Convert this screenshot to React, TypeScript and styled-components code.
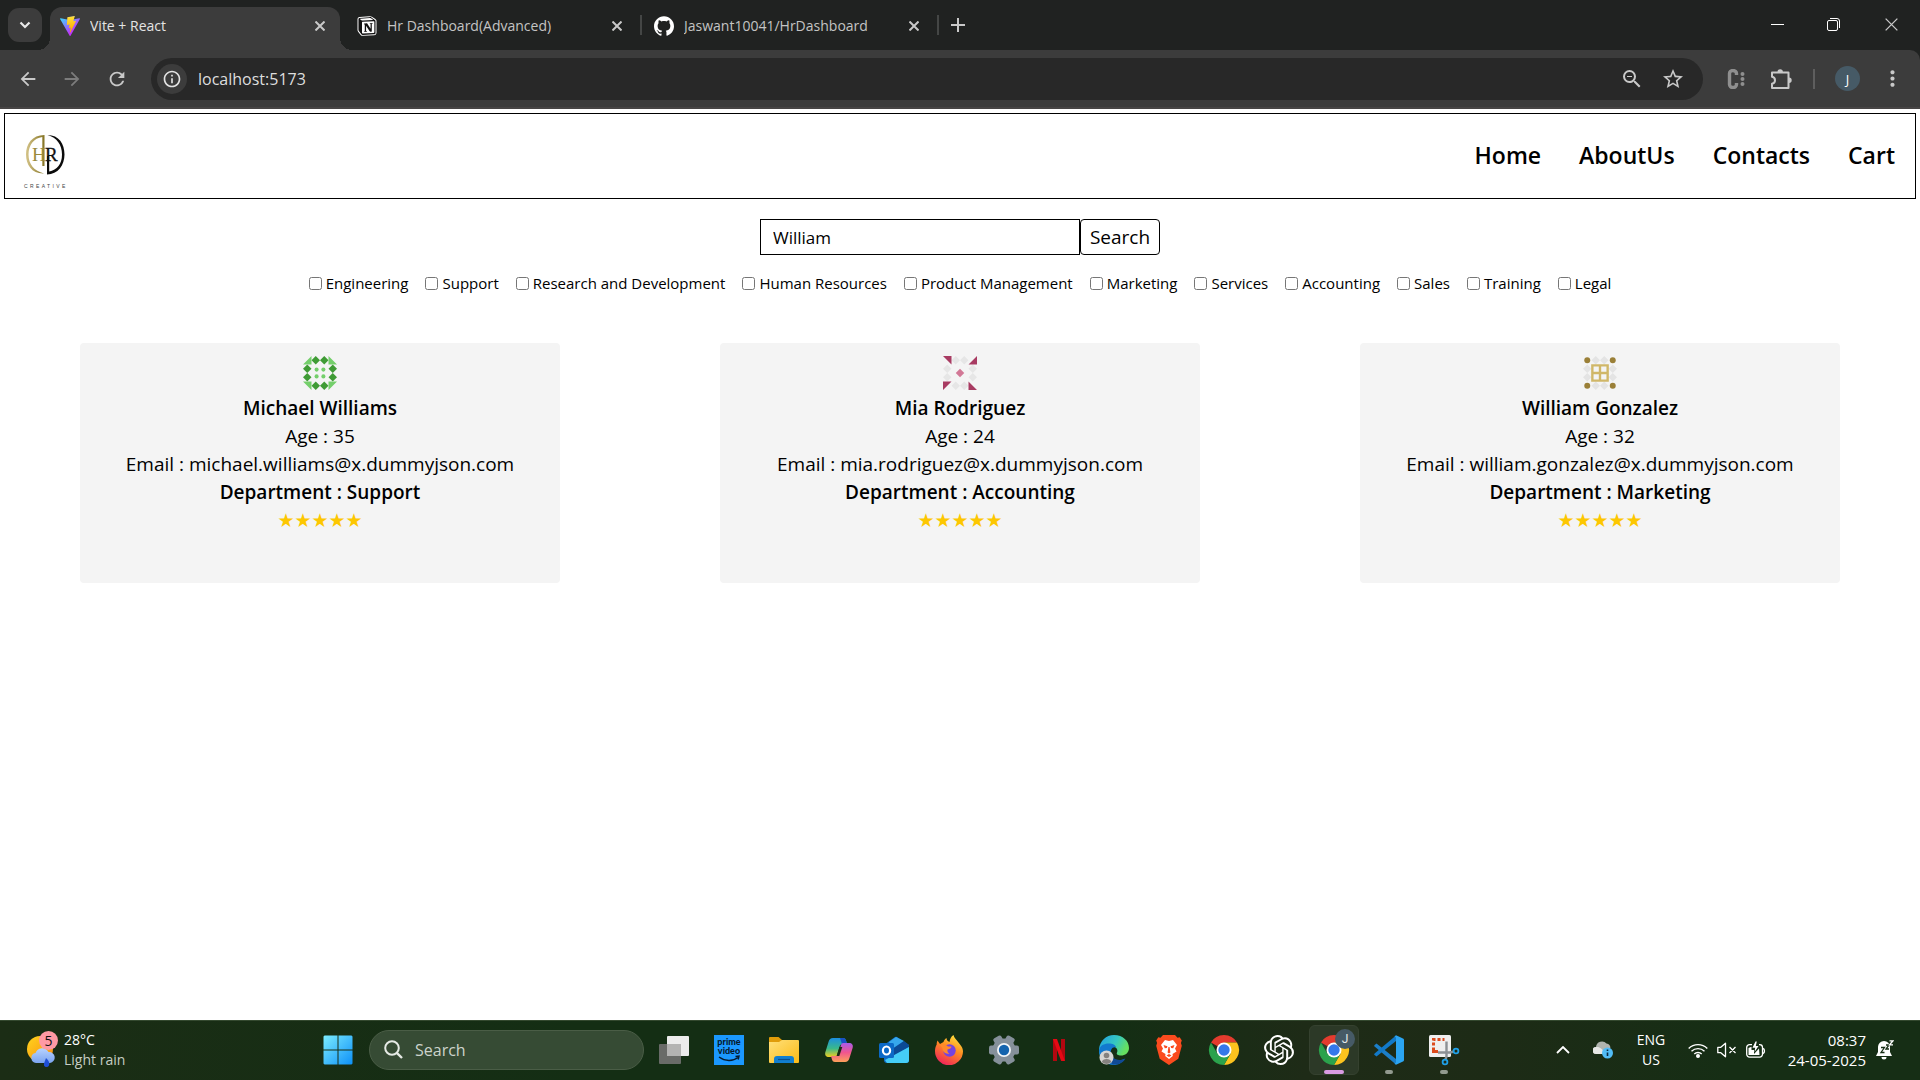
import React, { useState } from "react";
import styled, { createGlobalStyle } from "styled-components";
import {
  MdArrowBack,
  MdArrowForward,
  MdRefresh,
  MdZoomOut,
  MdStarBorder,
  MdMoreVert,
  MdInfoOutline,
} from "react-icons/md";
import { SiGithub, SiNotion, SiOpenai } from "react-icons/si";

const GlobalStyle = createGlobalStyle`
  * { box-sizing: border-box; }
  body {
    margin: 0;
    background: #fff;
    color: #000;
    font-family: "Open Sans", "Noto Sans", sans-serif;
  }
  button, input { font-family: inherit; color: inherit; }
  svg { display: block; flex: none; }
`;

const Desktop = styled.div`
  display: flex;
  flex-direction: column;
  min-height: 100vh;
`;

/* ---------- browser chrome ---------- */

const TabStrip = styled.header`
  display: flex;
  align-items: flex-end;
  height: 50px;
  padding-left: 8px;
  background: #202221;
`;

const IconButton = styled.button<{ $w?: number; $h?: number; $dim?: boolean }>`
  display: flex;
  align-items: center;
  justify-content: center;
  flex: none;
  width: ${(p) => p.$w ?? 34}px;
  height: ${(p) => p.$h ?? 34}px;
  padding: 0;
  border: 0;
  border-radius: 17px;
  background: none;
  color: ${(p) => (p.$dim ? "#7c7c7c" : "#c9c9c9")};
`;

const TabSearch = styled(IconButton)`
  align-self: center;
  border-radius: 11px;
  background: #3c3c3c;
  color: #e8e8e8;
`;

const Tabs = styled.div`
  display: flex;
  align-items: flex-end;
  margin-left: 8px;
`;

const Tab = styled.div<{ $active?: boolean }>`
  position: relative;
  display: flex;
  align-items: center;
  width: 290px;
  height: 43px;
  padding: 0 10px 6px;
  border-radius: 12px 12px 0 0;
  background: ${(p) => (p.$active ? "#3c3c3c" : "transparent")};
  color: ${(p) => (p.$active ? "#e4e4e4" : "#c4c4c4")};
  font-size: 14px;

  &::before,
  &::after {
    content: "";
    display: ${(p) => (p.$active ? "block" : "none")};
    position: absolute;
    bottom: 0;
    width: 12px;
    height: 12px;
  }
  &::before {
    right: 100%;
    background: radial-gradient(circle at 0 0, transparent 12px, #3c3c3c 12px);
  }
  &::after {
    left: 100%;
    background: radial-gradient(circle at 100% 0, transparent 12px, #3c3c3c 12px);
  }
`;

const TabTitle = styled.span`
  flex: 1;
  margin-left: 10px;
  white-space: nowrap;
  overflow: hidden;
`;

const Separator = styled.span<{ $show?: boolean }>`
  width: 2px;
  height: 20px;
  margin: 0 2px 15px 3px;
  background: ${(p) => (p.$show ? "#444645" : "transparent")};
`;

const WindowControls = styled.div`
  display: flex;
  align-self: stretch;
  margin-left: auto;
`;

const Toolbar = styled.div`
  display: flex;
  align-items: center;
  height: 59px;
  padding: 0 11px;
  background: #3c3c3c;
  border-bottom: 2px solid #474545;
  border-radius: 0 10px 0 0;
`;

const ToolbarBack = styled.div`
  background: #202221;
`;

const Omnibox = styled.div`
  display: flex;
  align-items: center;
  flex: 1;
  height: 42px;
  margin: 0 16px;
  padding: 0 13px 0 6px;
  border-radius: 21px;
  background: #282828;
`;

const SiteInfo = styled(IconButton)`
  background: #3c3c3c;
  color: #e3e3e3;
`;

const Address = styled.input`
  flex: 1;
  min-width: 0;
  margin-left: 11px;
  padding: 0;
  border: 0;
  outline: 0;
  background: none;
  color: #dedede;
  font-size: 16px;
`;

const ToolbarRule = styled.span`
  width: 2px;
  height: 20px;
  margin: 0 10px 0 4px;
  background: #5e5e5e;
`;

const Profile = styled(IconButton)`
  margin: 0 15px 0 10px;
  background: #465a66;
  color: #fff;
  font-size: 13px;
`;

/* ---------- page ---------- */

const Page = styled.main`
  flex: 1;
  padding-top: 4px;
`;

const NavBar = styled.nav`
  display: flex;
  align-items: center;
  justify-content: space-between;
  height: 86px;
  margin: 0 4px;
  padding: 0 20px 2px 16px;
  border: 1px solid #000;
`;

const NavLinks = styled.ul`
  display: flex;
  gap: 38px;
  margin: 0;
  padding: 0;
  list-style: none;
`;

const NavLink = styled.a`
  color: #000;
  font-size: 23px;
  font-weight: 600;
  line-height: 32px;
  text-decoration: none;
`;

const SearchForm = styled.form`
  display: flex;
  justify-content: center;
  margin-top: 20px;
`;

const SearchInput = styled.input`
  width: 320px;
  height: 36px;
  padding: 0 12px;
  border: 1px solid #000;
  border-radius: 0;
  outline: 0;
  background: #fff;
  font-size: 17px;
`;

const SearchButton = styled.button`
  width: 80px;
  height: 36px;
  padding: 0;
  border: 1px solid #000;
  border-radius: 4px;
  background: #fff;
  font-size: 19px;
  line-height: 28px;
`;

const Filters = styled.div`
  display: flex;
  flex-wrap: wrap;
  justify-content: center;
  gap: 17px;
  margin-top: 16px;
`;

const Filter = styled.label`
  display: flex;
  align-items: center;
  gap: 4px;
  font-size: 15px;
  line-height: 24px;

  input {
    width: 13px;
    height: 13px;
    margin: 0;
  }
`;

const Cards = styled.section`
  display: flex;
  flex-wrap: wrap;
  justify-content: space-around;
  margin-top: 48px;
`;

const Card = styled.article`
  display: flex;
  flex-direction: column;
  align-items: center;
  width: 480px;
  min-height: 240px;
  padding-top: 13px;
  border-radius: 4px;
  background: #f4f4f4;
  font-size: 19px;
  line-height: 28px;

  svg { margin-bottom: 4px; }
`;

const Line = styled.p<{ $strong?: boolean }>`
  margin: 0;
  font-weight: ${(p) => (p.$strong ? 600 : 400)};
`;

const Stars = styled.p`
  margin: 0;
  color: #fdc700;
  font-family: "DejaVu Sans", sans-serif;
  font-size: 19px;
`;

/* ---------- taskbar ---------- */

const Taskbar = styled.footer`
  display: flex;
  align-items: center;
  height: 60px;
  padding: 0 16px 2px 26px;
  border-top: 1px solid #34492f;
  background: linear-gradient(90deg, #1b2d15 0%, #142e14 30%, #142e14 58%, #1e2b17 68%, #1d2b16 78%, #162e15 90%);
  color: #fff;
`;

const Weather = styled.button`
  display: flex;
  align-items: center;
  gap: 6px;
  width: 287px;
  padding: 0;
  border: 0;
  background: none;
  text-align: left;
  font-size: 14px;
  line-height: 20px;

  span { display: block; }
  span + span { color: #c6cdc4; }
`;

const AppList = styled.div`
  display: flex;
  align-items: center;
  gap: 5px;
`;

const AppButton = styled.button<{ $active?: boolean }>`
  position: relative;
  display: flex;
  align-items: center;
  justify-content: center;
  width: 50px;
  height: 50px;
  padding: 0;
  border: 1px solid ${(p) => (p.$active ? "#35412f" : "transparent")};
  border-radius: 6px;
  background: ${(p) => (p.$active ? "#2c3927" : "transparent")};
`;

const Indicator = styled.span<{ $active?: boolean }>`
  position: absolute;
  bottom: 0;
  left: 50%;
  width: ${(p) => (p.$active ? 20 : 8)}px;
  height: 4px;
  border-radius: 2px;
  background: ${(p) => (p.$active ? "#d99be2" : "#929a8f")};
  transform: translateX(-50%);
`;

const TaskSearch = styled.label`
  display: flex;
  align-items: center;
  gap: 12px;
  width: 275px;
  height: 40px;
  margin-left: 1px;
  padding: 0 14px;
  border: 1px solid #4a5d46;
  border-radius: 20px;
  background: #364b34;

  input {
    flex: 1;
    min-width: 0;
    padding: 0;
    border: 0;
    outline: 0;
    background: none;
    font-size: 16px;
  }
  input::placeholder { color: #ccd3cb; opacity: 1; }
`;

const Tray = styled.div`
  display: flex;
  align-items: center;
  margin-left: auto;
`;

const TrayItem = styled.button<{ $w: number; $clock?: boolean }>`
  display: flex;
  flex-direction: column;
  align-items: ${(p) => (p.$clock ? "flex-end" : "center")};
  width: ${(p) => p.$w}px;
  padding: 0;
  border: 0;
  background: none;
  font-size: ${(p) => (p.$clock ? 15 : 14)}px;
  line-height: 20px;
  white-space: nowrap;
`;

const Quick = styled.button`
  display: flex;
  gap: 9px;
  margin: 0 14px 0 11px;
  padding: 0;
  border: 0;
  background: none;
`;

/* ---------- drawings ---------- */

const CloseIcon = ({ size = 10, w = 2 }: { size?: number; w?: number }) => (
  <svg width={size} height={size} viewBox="0 0 10 10" fill="none" stroke="currentColor" strokeWidth={w}>
    <path d="M.5.5l9 9M9.5.5l-9 9" />
  </svg>
);

const ViteIcon = () => (
  <svg width="20" height="20" viewBox="0 0 256 257">
    <defs>
      <linearGradient id="v1" x1="-.8%" x2="57.6%" y1="7.7%" y2="78.4%">
        <stop offset="0" stopColor="#41D1FF" />
        <stop offset="1" stopColor="#BD34FE" />
      </linearGradient>
      <linearGradient id="v2" x1="43.4%" x2="50.3%" y1="2.2%" y2="89%">
        <stop offset="0" stopColor="#FFEA83" />
        <stop offset=".083" stopColor="#FFDD35" />
        <stop offset="1" stopColor="#FFA800" />
      </linearGradient>
    </defs>
    <path fill="url(#v1)" d="M255.153 37.938L134.897 252.976c-2.483 4.44-8.862 4.466-11.382.048L.875 37.958c-2.746-4.814 1.371-10.646 6.827-9.67l120.385 21.517a6.537 6.537 0 0 0 2.322-.004l117.867-21.483c5.438-.991 9.574 4.796 6.877 9.62Z" />
    <path fill="url(#v2)" d="M185.432.063L96.44 17.501a3.268 3.268 0 0 0-2.634 3.014l-5.474 92.456a3.268 3.268 0 0 0 3.997 3.378l24.777-5.718c2.318-.535 4.413 1.507 3.936 3.838l-7.361 36.047c-.495 2.426 1.782 4.5 4.151 3.78l15.304-4.649c2.372-.72 4.652 1.36 4.15 3.788l-11.698 56.621c-.732 3.542 3.979 5.473 5.943 2.437l1.313-2.028l72.516-144.72c1.215-2.423-.88-5.186-3.54-4.672l-25.505 4.922c-2.396.462-4.435-1.77-3.759-4.114l16.646-57.705c.677-2.35-1.37-4.583-3.769-4.113Z" />
  </svg>
);

const NotionIcon = () => (
  <svg width="20" height="20" viewBox="-1.500 -1.500 27 27">
    <path
      d="M1.936 1.035l13.31-.98c1.634-.14 2.055-.047 3.082.7l4.249 2.986c.7.513.934.653.934 1.213v16.378c0 1.026-.373 1.634-1.68 1.726l-15.458.934c-.98.047-1.448-.093-1.962-.747l-3.129-4.06c-.56-.747-.793-1.306-.793-1.866V2.667c0-.719.374-1.318 1.447-1.632z"
      fill="#fff"
      stroke="#fff"
      strokeWidth="2.600"
    />
    <SiNotion x="0" y="0" size={24} color="#111" />
  </svg>
);

const ExtensionC = () => (
  <svg width="20" height="20" viewBox="0 0 20 20" fill="none" stroke="#8f8f8f">
    <path d="M10.500 6V4.500a3.500 3 0 0 0-7 0v11a3.500 3 0 0 0 7 0V14" strokeWidth="3.400" />
    <g fill="#8f8f8f" stroke="none">
      <circle cx="16.500" cy="5" r="2" />
      <circle cx="16.500" cy="10" r="2" />
      <circle cx="16.500" cy="15" r="2" />
    </g>
  </svg>
);

const PuzzleIcon = () => (
  <svg width="22" height="22" viewBox="0 0 22 22">
    <path
      d="M2 4.500h16.500V20H2v-4.200c4-.8 4-6.300 0-7.100z"
      fill="none"
      stroke="currentColor"
      strokeWidth="2"
      strokeLinejoin="round"
    />
    <path d="M7.500 4a2.700 2.700 0 0 1 5.400 0zM19 9.500a2.700 2.700 0 0 1 0 5.400z" fill="currentColor" />
  </svg>
);

const HrLogo = () => (
  <svg width="50" height="70" viewBox="0 -4 50 70">
    <defs>
      <linearGradient id="gold" x1="0" x2="1">
        <stop offset="0" stopColor="#d5c489" />
        <stop offset="1" stopColor="#857424" />
      </linearGradient>
    </defs>
    <path d="M23.500 11v31h-2.200V13C13 14 7.500 21 7.500 30.500S13 47 23 49.500C11 50 5 41 5 30.500S11 11 23.500 11z" fill="url(#gold)" />
    <path d="M26.500 11C38 11 43.500 20 43.500 30.500S37 50.500 26 50.500V32h2.200v15.500C36 46 41 40 41 30.500S36 13.500 26.500 11z" fill="#0b0b0b" />
    <text x="11" y="37" fontFamily="Liberation Serif, serif" fontSize="19" fill="#9a8a3c">H</text>
    <text x="24" y="37" fontFamily="Liberation Serif, serif" fontSize="19" fill="#111" stroke="#111" strokeWidth=".3">R</text>
    <text x="3" y="64" fontFamily="Liberation Sans, sans-serif" fontSize="5" letterSpacing="2.400" fill="#444">
      CREATIVE
    </text>
  </svg>
);

const edgeCells = [
  [3, 1], [5, 1], [1, 3], [1, 5], [7, 3], [7, 5], [3, 7], [5, 7],
];

const Diamonds = ({ fill }: { fill: string }) => (
  <g fill={fill}>
    {edgeCells.map(([x, y]) => (
      <path key={`${x}-${y}`} d={`M${x} ${y - 1}L${x + 1} ${y}L${x} ${y + 1}L${x - 1} ${y}z`} />
    ))}
  </g>
);

const Identicon = ({ kind }: { kind: string }) => (
  <svg width="34" height="34" viewBox="0 0 8 8" role="img" aria-label="avatar">
    {kind === "green" && (
      <>
        <Diamonds fill="#3f9b35" />
        <path fill="#74cf6b" d="M0 2h2V0zM8 2H6V0zM0 6h2v2zM8 6H6v2z" />
        <g fill="#74cf6b">
          <circle cx="3.200" cy="3.200" r=".48" />
          <circle cx="4.800" cy="3.200" r=".48" />
          <circle cx="3.200" cy="4.800" r=".48" />
          <circle cx="4.800" cy="4.800" r=".48" />
        </g>
      </>
    )}
    {kind === "pink" && (
      <>
        <Diamonds fill="#e6e6e6" />
        <path fill="#a83b62" d="M0 0h2v2zM8 0v2H6zM0 6h2L0 8zM6 6v2h2z" />
        <path fill="#d27896" d="M4 3l1 1-1 1-1-1z" />
      </>
    )}
    {kind === "gold" && (
      <>
        <Diamonds fill="#e4e4e4" />
        <g fill="#9a7f37">
          <circle cx="1" cy="1" r=".7" />
          <circle cx="7" cy="1" r=".7" />
          <circle cx="1" cy="7" r=".7" />
          <circle cx="7" cy="7" r=".7" />
        </g>
        <path d="M2.200 2.200h3.600v3.600H2.200zM4 2v4M2 4h4" fill="none" stroke="#d0b768" strokeWidth=".56" />
      </>
    )}
  </svg>
);

const WeatherIcon = () => (
  <svg width="32" height="38" viewBox="0 0 32 38">
    <defs>
      <linearGradient id="sun" x1="0" x2="1" y1="0" y2="1">
        <stop offset="0" stopColor="#ffd51c" />
        <stop offset="1" stopColor="#f98a13" />
      </linearGradient>
      <linearGradient id="cloud" x2="0" y2="1">
        <stop offset="0" stopColor="#b8d3ff" />
        <stop offset="1" stopColor="#7ba4f0" />
      </linearGradient>
    </defs>
    <circle cx="14" cy="18" r="13" fill="url(#sun)" />
    <path d="M10 32a5 5 0 0 1-.5-9.900 7 7 0 0 1 13-1A5.500 5.500 0 0 1 24 32z" fill="url(#cloud)" />
    <path d="M20 27c3 3 4 5 3 7.500a2.800 2.800 0 0 1-5 0c-.5-2 1-4 2-7.500z" fill="#1f4fd6" />
    <circle cx="22.500" cy="9.500" r="9.500" fill="#ff99a4" />
    <text x="22.500" y="14.500" textAnchor="middle" fontSize="14" fill="#111">5</text>
  </svg>
);

const StartIcon = () => (
  <svg width="30" height="30" viewBox="0 0 30 30">
    <defs>
      <linearGradient id="win" x2="1" y2="1">
        <stop offset="0" stopColor="#7cecff" />
        <stop offset="1" stopColor="#0d90f7" />
      </linearGradient>
    </defs>
    <path fill="url(#win)" d="M1.500.5h13v14H.5v-13zM15.500.5h13l1 1v13h-14zM.5 15.500h14v14h-13l-1-1zM15.500 15.500h14v13l-1 1h-13z" />
  </svg>
);

const TaskViewIcon = () => (
  <svg width="30" height="28" viewBox="0 0 30 28">
    <rect y="8" width="22" height="20" rx="1" fill="#696b68" />
    <rect x="8" width="22" height="20" rx="1" fill="#ececec" />
    <path d="M8 8h14v12H8z" fill="#b3b3b2" />
  </svg>
);

const PrimeIcon = () => (
  <svg width="30" height="30" viewBox="0 0 30 30">
    <rect width="30" height="30" fill="#1b98ff" />
    <g fill="#061a2e" fontFamily="Lato, sans-serif" fontWeight="900" fontSize="9" textAnchor="middle">
      <text x="15" y="10">prime</text>
      <text x="15" y="19">video</text>
    </g>
    <path d="M5 22c6 4.500 14 4.500 19 .5M21.500 21.500l3.500-.5-.8 3.500" fill="none" stroke="#061a2e" strokeWidth="1.400" />
  </svg>
);

const FolderIcon = () => (
  <svg width="30" height="28" viewBox="0 0 30 28">
    <defs>
      <linearGradient id="fold" x2="1" y2="1">
        <stop offset="0" stopColor="#ffe07a" />
        <stop offset="1" stopColor="#fbbb16" />
      </linearGradient>
    </defs>
    <path d="M0 2a1 1 0 0 1 1-1h8.500L13 4v6H0z" fill="#e09c0a" />
    <path d="M0 6h10l3-2h16a1 1 0 0 1 1 1v21a1 1 0 0 1-1 1H1a1 1 0 0 1-1-1z" fill="url(#fold)" />
    <path d="M5 27v-4a3 3 0 0 1 3-3h14a3 3 0 0 1 3 3v4z" fill="#117fd0" />
    <path d="M9 23.500h12" stroke="#0a4f8e" strokeWidth="1.200" />
  </svg>
);

const CopilotIcon = () => (
  <svg width="30" height="28" viewBox="0 0 30 28">
    <defs>
      <linearGradient id="cp1" x2="0" y2="1">
        <stop offset="0" stopColor="#1c8fe0" />
        <stop offset=".55" stopColor="#3ab98a" />
        <stop offset="1" stopColor="#f2cd1d" />
      </linearGradient>
      <linearGradient id="cp2" x2="0" y2="1">
        <stop offset="0" stopColor="#a95bea" />
        <stop offset=".5" stopColor="#f0558f" />
        <stop offset="1" stopColor="#fca05a" />
      </linearGradient>
    </defs>
    <path d="M9 2h10c2 0 2.600 1 3.200 3l.8 3h-4c-2 0-3 1-3.600 3l-2.400 8c-.5 1.600-1.200 2-3 2H5c-3 0-4.500-2-3.600-5L4.500 6c.8-2.600 2-4 4.500-4z" fill="url(#cp1)" />
    <path d="M16 2h3c2 0 2.600 1 3.200 3l.8 3h-5z" fill="#1850c4" />
    <path d="M21 26H11c-2 0-2.600-1-3.200-3L7 20h4c2 0 3-1 3.600-3L17 9c.5-1.600 1.200-2 3-2h5c3 0 4.500 2 3.600 5l-3.100 10c-.8 2.600-2 4-4.500 4z" fill="url(#cp2)" />
    <path d="M15.500 11h2.800l-3 9h-2.600z" fill="#172e15" />
  </svg>
);

const OutlookIcon = () => (
  <svg width="30" height="28" viewBox="0 0 30 28">
    <path d="M5 9l11-8a2 2 0 0 1 2 0l12 8v15a3 3 0 0 1-3 3H8a3 3 0 0 1-3-3z" fill="#1070cb" />
    <path d="M10 6l7-5 8 4-12 9z" fill="#36a8ec" />
    <path d="M25 5l5 4v2L13 21l-3-6z" fill="#0b4a95" />
    <path d="M30 11v13a3 3 0 0 1-3 3H8l-2-3z" fill="#45cdf7" />
    <rect y="7" width="15" height="15" rx="1.500" fill="#0c69c6" />
    <ellipse cx="7.500" cy="14.500" rx="3.600" ry="4" fill="none" stroke="#fff" strokeWidth="2.200" />
  </svg>
);

const FirefoxIcon = () => (
  <svg width="30" height="30" viewBox="0 0 30 30">
    <defs>
      <linearGradient id="ff" x1=".8" x2=".3" y1="0" y2="1">
        <stop offset="0" stopColor="#ffe73e" />
        <stop offset=".45" stopColor="#ff8c22" />
        <stop offset="1" stopColor="#f0215b" />
      </linearGradient>
    </defs>
    <path d="M3.500 5.500L6 9l3.500-2C10 5 11 4 12.500 3c0 2 1 3 3 4 .5-3 1.500-5.500 4-7 .5 3 3 4.500 5 7.500 2 2.500 4.500 5 4.500 9A14 14 0 0 1 1 16c0-3 .8-5 1.700-6.500C2.500 8 3 7 3.500 5.500z" fill="url(#ff)" />
    <circle cx="15.500" cy="15.500" r="6.200" fill="#7543e0" />
    <path d="M6 10c3-1 6-.5 8 1.500h3.500c0 1.500-2 2.500-4 3-.5 2 .5 3.500 2 4-4 1-7-2-7-5z" fill="#ff8a2a" />
  </svg>
);

const GearIcon = () => (
  <svg width="30" height="30" viewBox="0 0 30 30">
    <g fill="#85909a">
      <circle cx="15" cy="15" r="11.500" />
      {[30, 90, 150, 210, 270, 330].map((a) => (
        <rect key={a} x="10.500" y="0" width="9" height="8" rx="2" transform={`rotate(${a} 15 15)`} />
      ))}
    </g>
    <circle cx="15" cy="15" r="7" fill="#f2f5f8" />
    <circle cx="15" cy="15" r="5.200" fill="#1464ae" />
  </svg>
);

const NetflixIcon = () => (
  <svg width="14" height="22" viewBox="0 0 14 22">
    <path d="M1 0h4v22l-4 .3zM9 0h4v22l-4-.2z" fill="#b20710" />
    <path d="M1 0h4l8 22.300-4-.5z" fill="#e50914" />
  </svg>
);

const EdgeIcon = () => (
  <svg width="30" height="30" viewBox="0 0 30 30">
    <defs>
      <linearGradient id="ed1" x2="1" y2=".4">
        <stop offset="0" stopColor="#1f9de6" />
        <stop offset=".6" stopColor="#36c8c0" />
        <stop offset="1" stopColor="#66e060" />
      </linearGradient>
    </defs>
    <path d="M0 14C1 6 7 0 15 0c9 0 15 6 15 13 0 5-4 7.500-8 7.500-3 0-5-1-4-3 1-1.500.5-6-5-6-6 0-12 5-12 9-.8-2-1-4-1-6.500z" fill="url(#ed1)" />
    <path d="M0 15c1-5 6-7 11-6.500 4 .3 6 2.500 6 4-4-1-6 3-5 7 1.500 5 8 7.500 14 4C23 28 19 30 15 30 7 30 0 24 0 15z" fill="#1379cf" />
    <path d="M12 18c0 6 8 9 14.500 5.500C24 28 19 30 14 29.500c-4-2.500-5-7-2-11.500z" fill="#104a96" />
    <circle cx="7.500" cy="22.500" r="7" fill="#d6d5d3" />
    <circle cx="7.500" cy="20.500" r="2.800" fill="#85827f" />
    <path d="M2.800 27c.5-4 9-4 9.500 0-2.500 2.500-7 2.500-9.500 0z" fill="#85827f" />
  </svg>
);

const BraveIcon = () => (
  <svg width="26" height="30" viewBox="0 0 26 30">
    <path d="M7 0h12l2.500 2.700 2.200-.4 2.100 3.200-.9 2.500.9 2.800-3.500 13L13 30 3.700 23.800.2 10.800 1.100 8 .2 5.500l2.100-3.200 2.200.4z" fill="#fb4b1e" />
    <path d="M9 5l4 1 4-1 4 5-2 3.500 1.500 3-4 2.500.3 2-3.800 3-3.800-3 .3-2-4-2.500 1.500-3L5 10z" fill="#fff" />
    <path d="M7.500 10l4 1.200-.7 1.800-2 .2zM18.500 10l-4 1.200.7 1.800 2 .2zM12.400 12h1.200l.8 5.500-1.400 1-1.400-1zM10.500 20.500L13 19l2.500 1.500L13 22z" fill="#fb4b1e" />
  </svg>
);

const ChromeIcon = ({ badge }: { badge?: boolean }) => (
  <svg width="30" height="30" viewBox="0 0 30 30" overflow="visible">
    <path d="M15 15L2 7.500A15 15 0 0 1 28 7.500H15z" fill="#e33b2e" />
    <path d="M28 7.500A15 15 0 0 1 15 30l6.500-11.250L15 7.500z" fill="#fcc31e" />
    <path d="M15 30A15 15 0 0 1 2 7.500l6.500 11.250L15 22l6.500-3.250z" fill="#2ba24c" />
    <circle cx="15" cy="15" r="7.500" fill="#fff" />
    <circle cx="15" cy="15" r="5.700" fill="#3478ea" />
    {badge && (
      <>
        <circle cx="26" cy="4" r="10" fill="#465a66" />
        <text x="26" y="8" textAnchor="middle" fontFamily="Roboto, sans-serif" fontSize="12" fill="#e4e8ea">J</text>
      </>
    )}
  </svg>
);

const CodeIcon = () => (
  <svg width="30" height="30" viewBox="0 0 30 30">
    <path d="M2.500 8.500L22 24v5.500L.6 11.500a1 1 0 0 1 0-1.500z" fill="#1c7fc9" />
    <path d="M2.500 21.500L22 6V.5L.6 18.500a1 1 0 0 0 0 1.500z" fill="#1279c8" />
    <path d="M22 .2L29 3.500a1.600 1.600 0 0 1 1 1.500v20a1.600 1.600 0 0 1-1 1.500l-7 3.300-2-1.600c1 .5 2 0 2-1.500V3.500c0-1.500-1-2-2-1.500z" fill="#2ba5f2" />
  </svg>
);

const SnipIcon = () => (
  <svg width="30" height="30" viewBox="0 0 30 30" overflow="visible">
    <rect width="22" height="22" rx="1.500" fill="#efefef" />
    <path d="M4.500 15.500v-11h11" fill="none" stroke="#dc4a1c" strokeWidth="3" strokeDasharray="3 2" />
    <path d="M4.500 14v2.500H9" fill="none" stroke="#dc4a1c" strokeWidth="3" />
    <path d="M17.500 6.500v15l-1 3M9 17.500h12l4-1" fill="none" stroke="#8c9094" strokeWidth="2.400" />
    <circle cx="16" cy="27" r="2.400" fill="none" stroke="#1fa0e8" strokeWidth="1.800" />
    <circle cx="27" cy="16" r="2.400" fill="none" stroke="#1fa0e8" strokeWidth="1.800" />
  </svg>
);

const CloudInfoIcon = () => (
  <svg width="20" height="18" viewBox="0 0 20 18">
    <path d="M3 13a3.500 3.500 0 0 1 0-7 6 6 0 0 1 10.500-3.500C17 3 18 6 17 8v5z" fill="#b0b4ae" />
    <path d="M3.500 13a3.500 3.500 0 0 1-.5-7c4-.5 6 2 10 7z" fill="#e6e7e5" />
    <circle cx="14.500" cy="12" r="5.500" fill="#52bdf7" />
    <path d="M14.500 11.500V15M14.500 8.500v1.500" stroke="#0a2a44" strokeWidth="1.600" />
  </svg>
);

const WifiIcon = () => (
  <svg width="20" height="16" viewBox="0 0 20 16" fill="none" stroke="#fff" strokeWidth="1.400">
    <path d="M.7 6.500a13 13 0 0 1 18.600 0M3.500 9.300a9.300 9.300 0 0 1 13 0M6.300 12a5.300 5.300 0 0 1 7.400 0" />
    <circle cx="10" cy="14" r="1.300" fill="#fff" />
  </svg>
);

const MuteIcon = () => (
  <svg width="20" height="16" viewBox="0 0 20 16" fill="none" stroke="#fff" strokeWidth="1.300" strokeLinejoin="round">
    <path d="M.8 5.300h3L8.500 1.200v13.600l-4.700-4.100h-3zM12.500 5l6 6M18.500 5l-6 6" />
  </svg>
);

const BatteryIcon = () => (
  <svg width="20" height="16" viewBox="0 0 20 16" overflow="visible">
    <path d="M6 2.700H3.500A2.800 2.800 0 0 0 .7 5.500v6.800a2.800 2.800 0 0 0 2.800 2.800h10.200a2.800 2.800 0 0 0 2.800-2.800V5.500a2.800 2.800 0 0 0-2.800-2.800H13M17 6.500c2 .3 2 4.500 0 5" fill="none" stroke="#fff" strokeWidth="1.300" />
    <path d="M2.500 6l3-1.200V8H8v4l5-5.500.5 6.500h-11z" fill="#fff" />
    <path d="M9.500-.5L6.500 5.800h2.700L8.500 10 12.500 4H9.800l1-4.500z" fill="#fff" />
  </svg>
);

const BellIcon = () => (
  <svg width="18" height="20" viewBox="0 0 18 20">
    <path d="M8 1a6 6 0 0 0-6 6v5L0 16h16l-2-4V7a6 6 0 0 0-6-6z" fill="#fff" />
    <path d="M5.500 17h5a2.500 2.500 0 0 1-5 0z" fill="#fff" />
    <path d="M5 7.500h3.500L5 12.500h3.500M10 5h3l-3 4h3" fill="none" stroke="#172e15" strokeWidth="1.300" />
    <path d="M13.500.8h3.500l-3.500 4h3.500" fill="none" stroke="#fff" strokeWidth="1.300" />
  </svg>
);

/* ---------- data ---------- */

const tabs = [
  { title: "Vite + React", icon: <ViteIcon /> },
  { title: "Hr Dashboard(Advanced)", icon: <NotionIcon /> },
  { title: "Jaswant10041/HrDashboard", icon: <SiGithub size={20} color="#fff" /> },
];

const departments = [
  "Engineering", "Support", "Research and Development", "Human Resources",
  "Product Management", "Marketing", "Services", "Accounting", "Sales", "Training", "Legal",
];

const employees = [
  { name: "Michael Williams", age: 35, email: "michael.williams@x.dummyjson.com", department: "Support", rating: 5, avatar: "green" },
  { name: "Mia Rodriguez", age: 24, email: "mia.rodriguez@x.dummyjson.com", department: "Accounting", rating: 5, avatar: "pink" },
  { name: "William Gonzalez", age: 32, email: "william.gonzalez@x.dummyjson.com", department: "Marketing", rating: 5, avatar: "gold" },
];

const apps: { name: string; icon: React.ReactNode; state?: "open" | "active" }[] = [
  { name: "Task view", icon: <TaskViewIcon /> },
  { name: "Prime Video", icon: <PrimeIcon /> },
  { name: "File Explorer", icon: <FolderIcon /> },
  { name: "Copilot", icon: <CopilotIcon /> },
  { name: "Outlook", icon: <OutlookIcon /> },
  { name: "Firefox", icon: <FirefoxIcon /> },
  { name: "Settings", icon: <GearIcon /> },
  { name: "Netflix", icon: <NetflixIcon /> },
  { name: "Edge", icon: <EdgeIcon /> },
  { name: "Brave", icon: <BraveIcon /> },
  { name: "Chrome", icon: <ChromeIcon /> },
  { name: "ChatGPT", icon: <SiOpenai size={30} color="#fff" /> },
  { name: "Chrome window", icon: <ChromeIcon badge />, state: "active" },
  { name: "Visual Studio Code", icon: <CodeIcon />, state: "open" },
  { name: "Snipping Tool", icon: <SnipIcon />, state: "open" },
];

export default function App() {
  const [query, setQuery] = useState("William");

  return (
    <>
      <GlobalStyle />
      <Desktop>
        <TabStrip>
          <TabSearch aria-label="Search tabs">
            <svg width="12" height="8" viewBox="0 0 12 8" fill="none" stroke="currentColor" strokeWidth="2.200">
              <path d="M1.500 1.500L6 6l4.500-4.500" />
            </svg>
          </TabSearch>
          <Tabs>
            {tabs.map((tab, i) => (
              <React.Fragment key={tab.title}>
                <Tab $active={i === 0}>
                  {tab.icon}
                  <TabTitle>{tab.title}</TabTitle>
                  <IconButton $w={20} $h={20} aria-label="Close tab">
                    <CloseIcon />
                  </IconButton>
                </Tab>
                <Separator $show={i > 0} />
              </React.Fragment>
            ))}
            <IconButton $h={50} aria-label="New tab">
              <svg width="14" height="14" viewBox="0 0 14 14" stroke="currentColor" strokeWidth="2">
                <path d="M7 0v14M0 7h14" />
              </svg>
            </IconButton>
          </Tabs>
          <WindowControls>
            <IconButton $w={56} $h={48} aria-label="Minimize">
              <svg width="13" height="13" viewBox="0 0 13 13" stroke="#fff">
                <path d="M0 6.500h13" />
              </svg>
            </IconButton>
            <IconButton $w={57} $h={48} aria-label="Restore">
              <svg width="13" height="13" viewBox="0 0 13 13" fill="none" stroke="#fff">
                <rect x=".5" y="2.500" width="10" height="10" rx="1.500" />
                <path d="M3 .5h7a2.500 2.500 0 0 1 2.500 2.500v7" />
              </svg>
            </IconButton>
            <IconButton $w={58} $h={48} aria-label="Close">
              <CloseIcon size={13} w={1} />
            </IconButton>
          </WindowControls>
        </TabStrip>

        <ToolbarBack>
          <Toolbar>
            <IconButton aria-label="Back"><MdArrowBack size={22} /></IconButton>
            <IconButton $w={54} $dim aria-label="Forward"><MdArrowForward size={22} /></IconButton>
            <IconButton $w={36} aria-label="Reload"><MdRefresh size={22} /></IconButton>
            <Omnibox>
              <SiteInfo $w={30} $h={30} aria-label="Site information"><MdInfoOutline size={20} /></SiteInfo>
              <Address aria-label="Address" defaultValue="localhost:5173" />
              <IconButton $w={48} aria-label="Zoom"><MdZoomOut size={24} /></IconButton>
              <IconButton aria-label="Bookmark"><MdStarBorder size={24} /></IconButton>
            </Omnibox>
            <IconButton aria-label="Extension"><ExtensionC /></IconButton>
            <IconButton $w={56} aria-label="Extensions"><PuzzleIcon /></IconButton>
            <ToolbarRule />
            <Profile $w={25} $h={25} aria-label="Profile">J</Profile>
            <IconButton aria-label="Menu"><MdMoreVert size={25} /></IconButton>
          </Toolbar>
        </ToolbarBack>

        <Page>
          <NavBar>
            <HrLogo />
            <NavLinks>
              {["Home", "AboutUs", "Contacts", "Cart"].map((l) => (
                <li key={l}><NavLink href="#">{l}</NavLink></li>
              ))}
            </NavLinks>
          </NavBar>

          <SearchForm onSubmit={(e) => e.preventDefault()}>
            <SearchInput aria-label="Search employees" value={query} onChange={(e) => setQuery(e.target.value)} />
            <SearchButton>Search</SearchButton>
          </SearchForm>

          <Filters>
            {departments.map((d) => (
              <Filter key={d}>
                <input type="checkbox" />
                {d}
              </Filter>
            ))}
          </Filters>

          <Cards>
            {employees.map((e) => (
              <Card key={e.email}>
                <Identicon kind={e.avatar} />
                <Line $strong>{e.name}</Line>
                <Line>Age : {e.age}</Line>
                <Line>Email : {e.email}</Line>
                <Line $strong>Department : {e.department}</Line>
                <Stars>{"★".repeat(e.rating)}</Stars>
              </Card>
            ))}
          </Cards>
        </Page>

        <Taskbar>
          <Weather>
            <WeatherIcon />
            <div>
              <span>28°C</span>
              <span>Light rain</span>
            </div>
          </Weather>
          <AppList>
            <AppButton aria-label="Start"><StartIcon /></AppButton>
            <TaskSearch>
              <svg width="19" height="19" viewBox="0 0 19 19" fill="none" stroke="#e6eae5" strokeWidth="2">
                <circle cx="8" cy="8" r="6.800" />
                <path d="M12.800 12.800l5.200 5.200" strokeWidth="2.400" />
              </svg>
              <input placeholder="Search" aria-label="Search" />
            </TaskSearch>
            {apps.map((app) => (
              <AppButton key={app.name} aria-label={app.name} $active={app.state === "active"}>
                {app.icon}
                {app.state && <Indicator $active={app.state === "active"} />}
              </AppButton>
            ))}
          </AppList>
          <Tray>
            <TrayItem $w={36} aria-label="Hidden icons">
              <svg width="14" height="8" viewBox="0 0 14 8" fill="none" stroke="#fff" strokeWidth="1.800">
                <path d="M1 7l6-6 6 6" />
              </svg>
            </TrayItem>
            <TrayItem $w={44} aria-label="OneDrive"><CloudInfoIcon /></TrayItem>
            <TrayItem $w={52}>
              <span>ENG</span>
              <span>US</span>
            </TrayItem>
            <Quick aria-label="Quick settings">
              <WifiIcon />
              <MuteIcon />
              <BatteryIcon />
            </Quick>
            <TrayItem $w={86} $clock>
              <span>08:37</span>
              <span>24-05-2025</span>
            </TrayItem>
            <TrayItem $w={38} aria-label="Notifications"><BellIcon /></TrayItem>
          </Tray>
        </Taskbar>
      </Desktop>
    </>
  );
}
